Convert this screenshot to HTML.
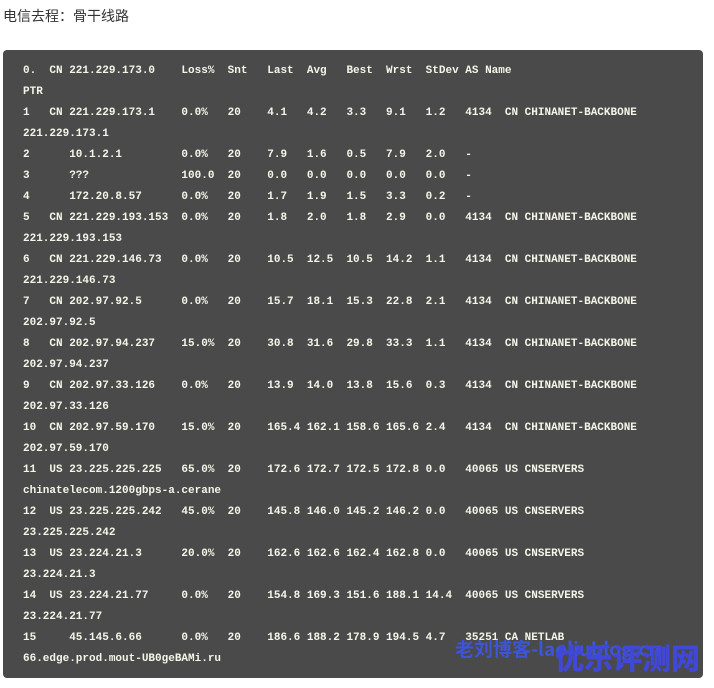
<!DOCTYPE html>
<html><head><meta charset="utf-8"><style>
body{margin:0;background:#fff;width:714px;height:688px;overflow:hidden;position:relative;font-family:"Liberation Sans","Noto Sans CJK SC",sans-serif}
.t{position:absolute;left:3px;top:6px;font-size:14px;color:#333}
pre{position:absolute;left:3px;top:50px;width:700px;height:628px;margin:0;box-sizing:border-box;background:#4a4a4a;border-radius:4px;padding:11px 0 0 20px;font-family:"Liberation Mono",monospace;font-size:11px;line-height:21px;color:#f4f4e8;font-weight:bold}
.w1{position:absolute;left:455px;top:638px;font-size:19px;font-weight:bold;color:#3d55d8;white-space:nowrap;font-family:"Noto Sans CJK SC",sans-serif;line-height:22px}
.w2{position:absolute;left:555px;top:640px;font-size:29px;font-weight:900;color:#4048d8;white-space:nowrap;font-family:"Noto Sans CJK SC",sans-serif;line-height:34px}
</style></head><body>
<div class="t">电信去程：骨干线路</div>
<pre>0.  CN 221.229.173.0    Loss%  Snt   Last  Avg   Best  Wrst  StDev AS Name
PTR
1   CN 221.229.173.1    0.0%   20    4.1   4.2   3.3   9.1   1.2   4134  CN CHINANET-BACKBONE
221.229.173.1
2      10.1.2.1         0.0%   20    7.9   1.6   0.5   7.9   2.0   -
3      ???              100.0  20    0.0   0.0   0.0   0.0   0.0   -
4      172.20.8.57      0.0%   20    1.7   1.9   1.5   3.3   0.2   -
5   CN 221.229.193.153  0.0%   20    1.8   2.0   1.8   2.9   0.0   4134  CN CHINANET-BACKBONE
221.229.193.153
6   CN 221.229.146.73   0.0%   20    10.5  12.5  10.5  14.2  1.1   4134  CN CHINANET-BACKBONE
221.229.146.73
7   CN 202.97.92.5      0.0%   20    15.7  18.1  15.3  22.8  2.1   4134  CN CHINANET-BACKBONE
202.97.92.5
8   CN 202.97.94.237    15.0%  20    30.8  31.6  29.8  33.3  1.1   4134  CN CHINANET-BACKBONE
202.97.94.237
9   CN 202.97.33.126    0.0%   20    13.9  14.0  13.8  15.6  0.3   4134  CN CHINANET-BACKBONE
202.97.33.126
10  CN 202.97.59.170    15.0%  20    165.4 162.1 158.6 165.6 2.4   4134  CN CHINANET-BACKBONE
202.97.59.170
11  US 23.225.225.225   65.0%  20    172.6 172.7 172.5 172.8 0.0   40065 US CNSERVERS
chinatelecom.1200gbps-a.cerane
12  US 23.225.225.242   45.0%  20    145.8 146.0 145.2 146.2 0.0   40065 US CNSERVERS
23.225.225.242
13  US 23.224.21.3      20.0%  20    162.6 162.6 162.4 162.8 0.0   40065 US CNSERVERS
23.224.21.3
14  US 23.224.21.77     0.0%   20    154.8 169.3 151.6 188.1 14.4  40065 US CNSERVERS
23.224.21.77
15     45.145.6.66      0.0%   20    186.6 188.2 178.9 194.5 4.7   35251 CA NETLAB
66.edge.prod.mout-UB0geBAMi.ru</pre>
<div class="w1">老刘博客-laoliublog.cn</div>
<div class="w2">优乐评测网</div>
</body></html>
